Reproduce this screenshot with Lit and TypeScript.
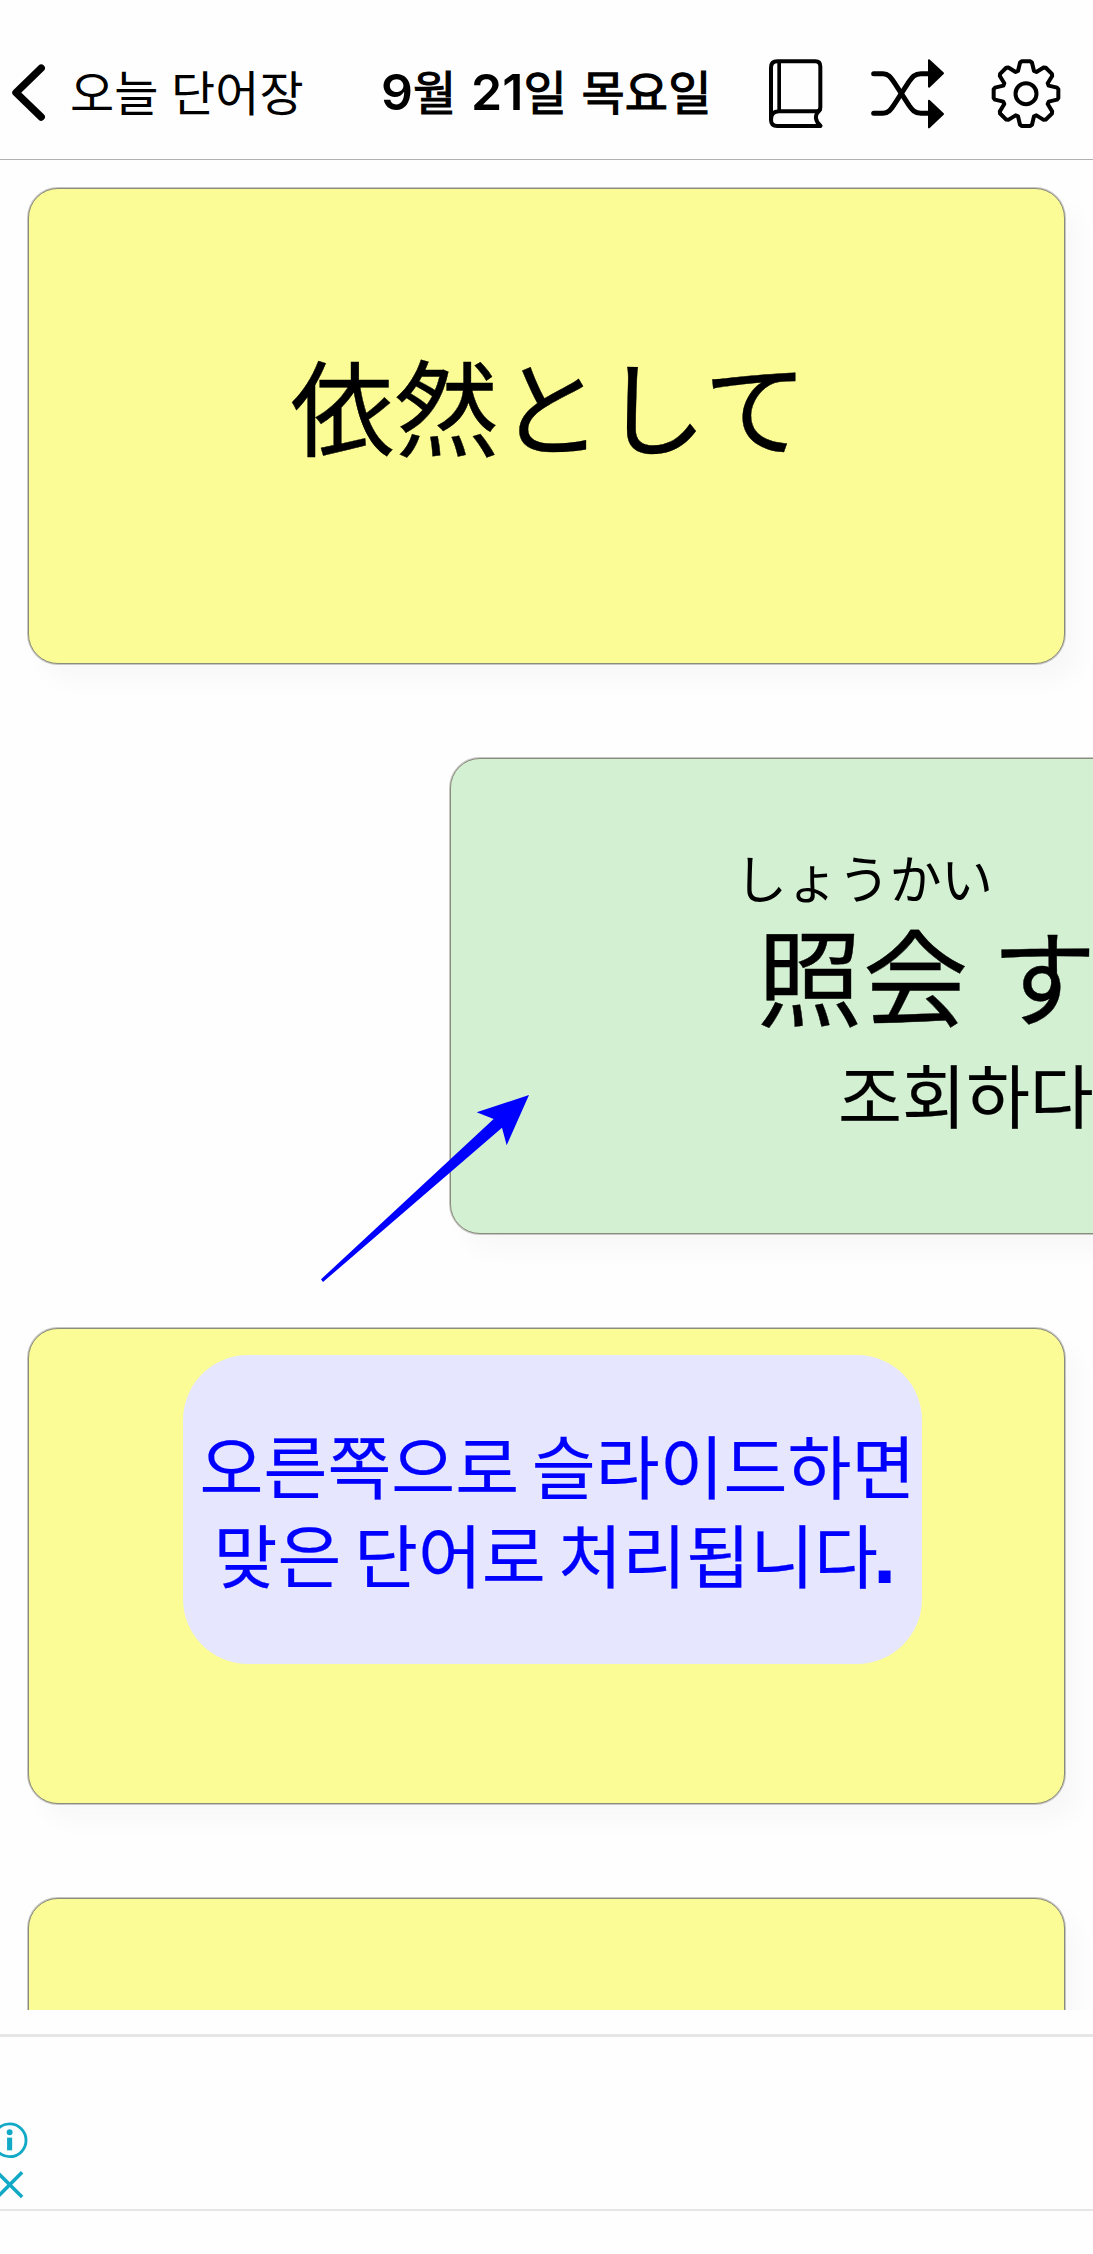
import { LitElement, html, css, svg } from "lit";
import { customElement, property } from "lit/decorators.js";

/** Outline of an eight-toothed gear centred on (cx, cy). */
function gearPath(cx: number, cy: number): string {
  const tooth: [number, number][] = [
    [-24, -68],
    [-18, -93],
    [-13, -97],
    [13, -97],
    [18, -93],
    [24, -68],
  ];
  const points: string[] = [];
  for (let i = 0; i < 8; i++) {
    const a = (i * Math.PI) / 4;
    for (const [x, y] of tooth) {
      const px = cx + x * Math.cos(a) - y * Math.sin(a);
      const py = cy + x * Math.sin(a) + y * Math.cos(a);
      points.push(`${px.toFixed(1)} ${py.toFixed(1)}`);
    }
  }
  return `M${points.join("L")}Z`;
}

@customElement("word-header")
export class WordHeader extends LitElement {
  static styles = css`
    :host {
      display: flex;
      align-items: flex-start;
      height: 159px;
      box-sizing: content-box;
      border-bottom: 1px solid #b0b0b0;
      color: #000;
      font-family: "Noto Sans CJK KR", sans-serif;
      white-space: nowrap;
    }
    svg {
      display: block;
      flex: none;
      fill: none;
      stroke: #000;
      stroke-linecap: round;
      stroke-linejoin: round;
    }
    .chevron { width: 35px; height: 59px; margin: 63px 0 0 11px; }
    .back {
      flex: none;
      width: 309px;
      margin: 54.500px 0 0 24px;
      font-size: 48px;
      line-height: 70px;
      letter-spacing: 0;
      word-spacing: 2px;
    }
    .title {
      flex: none;
      width: 388px;
      margin: 55px 0 0 2px;
      font-size: 47px;
      line-height: 70px;
      letter-spacing: 0.1px;
      -webkit-text-stroke: 1.2px #000;
      word-spacing: 4px;
    }
    .digits {
      font-family: Inter, sans-serif;
      font-size: 50px;
      font-weight: 600;
      line-height: 1px;
      -webkit-text-stroke: 0;
    }
    .book { width: 54px; height: 70px; margin-top: 59px; }
    .shuffle { width: 74px; height: 70px; margin: 58.7px 0 0 47.7px; }
    .gear { width: 70px; height: 70px; margin: 58.7px 0 0 46.500px; }
  `;

  render() {
    return html`
      <svg class="chevron" viewBox="0 0 35 59">
        <path stroke-width="7.4" d="M30.2 5.2L5 29.7L30.2 54" />
      </svg>
      <div class="back">오늘 단어장</div>
      <div class="title"><span class="digits">9</span>월 <span class="digits">21</span>일 목요일</div>
      <svg class="book" viewBox="87 57 162 210" stroke-width="12">
        <path d="M241 258H112Q93 258 93 239V83Q93 64 112 64H226Q241 64 241 80V202Q241 214 231 214H117Q93 214 93 239" />
        <path d="M117.500 66V212" stroke-width="11" />
        <path d="M238 211Q216 233 241 257" />
      </svg>
      <svg class="shuffle" viewBox="392 56 222 210" stroke-width="15">
        <path d="M400 100H428C445 100 452 112 462 127L506 195C515 208 523 219 542 219H566" />
        <path d="M400 219H428C445 219 452 207 462 192L506 124C515 111 523 100 542 100H566" />
        <path fill="#000" stroke-width="6" d="M566 60L608 99L566 139ZM566 181L608 221L566 261Z" />
      </svg>
      <svg class="gear" viewBox="755 56 210 210" stroke-width="12">
        ${svg`<path d=${gearPath(860, 160)} />`}
        <circle cx="860" cy="160" r="31.500" />
      </svg>
    `;
  }
}

@customElement("word-card")
export class WordCard extends LitElement {
  @property({ reflect: true }) tone = "yellow";

  static styles = css`
    :host {
      display: flex;
      flex-direction: column;
      align-items: center;
      flex: none;
      box-sizing: border-box;
      width: 1037px;
      height: 476px;
      margin-left: 28px;
      border: 1px solid #8c8c7c;
      border-radius: 30px;
      background: #fcfc96;
      box-shadow: 0 0 0 1px #c6c6c4, 14px 18px 24px rgba(20, 20, 50, 0.027);
    }
    :host([tone="green"]) {
      margin-left: 450px;
      background: #d3f0d2;
    }
  `;

  render() {
    return html`<slot></slot>`;
  }
}

@customElement("app-root")
export class AppRoot extends LitElement {
  static styles = css`
    :host {
      display: block;
      position: relative;
      width: 1093px;
      height: 2254px;
      overflow: hidden;
      background: #fefefe;
      color: #000;
    }
    .list {
      display: flex;
      flex-direction: column;
      gap: 94px;
      box-sizing: border-box;
      height: 1850px;
      padding-top: 28px;
      overflow: hidden;
    }
    .ja { font-family: "Noto Sans CJK JP", sans-serif; }
    .ko { font-family: "Noto Sans CJK KR", sans-serif; }
    .word {
      margin-top: 139.500px;
      padding-left: 5px;
      font-size: 104px;
      line-height: 150px;
      white-space: nowrap;
      -webkit-text-stroke: 0.4px #000;
    }
    .entry {
      display: flex;
      flex-direction: column;
      width: 100%;
      white-space: nowrap;
    }
    .reading {
      margin: 84.500px 0 0 284px;
      font-size: 52px;
      line-height: 66px;
      letter-spacing: -0.5px;
    }
    .kanji {
      margin: -3.500px 0 0 306px;
      font-size: 105px;
      line-height: 132px;
      letter-spacing: 1px;
      word-spacing: -2px;
      -webkit-text-stroke: 0.4px #000;
    }
    .meaning {
      margin: 4.500px 0 0 387px;
      font-size: 69.500px;
      line-height: 100px;
      -webkit-text-stroke: 0.2px #000;
    }
    .arrow {
      position: absolute;
      left: 321px;
      top: 1095px;
      width: 208px;
      height: 188px;
    }
    .tip {
      position: absolute;
      left: 182.500px;
      top: 1355px;
      width: 739.500px;
      height: 309px;
      box-sizing: border-box;
      padding-top: 63.500px;
      border-radius: 65px;
      background: #e6e6fe;
      color: #00f;
      font-size: 69.500px;
      line-height: 89.500px;
      word-spacing: -3px;
      white-space: nowrap;
      -webkit-text-stroke: 0.2px #00f;
    }
    .line1 { margin-left: 17px; }
    .line2 { margin-left: 31px; }
    .dot {
      margin-left: -5px;
      font: 700 84px/1px "Liberation Sans", sans-serif;
      -webkit-text-stroke: 0;
    }
    .ad {
      display: flex;
      flex-direction: column;
      box-sizing: border-box;
      height: 177px;
      margin-top: 24px;
      border-top: 3px solid #e6e6e6;
      border-bottom: 2px solid #e6e6e6;
    }
    .adchoices {
      display: block;
      width: 29px;
      height: 90px;
      margin-top: 84px;
      fill: none;
      stroke: #12a9c6;
    }
  `;

  render() {
    return html`
      <word-header></word-header>
      <main class="list">
        <word-card><div class="word ja">依然として</div></word-card>
        <word-card tone="green">
          <div class="entry">
            <div class="reading ja">しょうかい</div>
            <div class="kanji ja">照会 する</div>
            <div class="meaning ko">조회하다</div>
          </div>
        </word-card>
        <word-card></word-card>
        <word-card></word-card>
      </main>
      <footer class="ad">
        <svg class="adchoices" viewBox="0 0 29 90">
          <circle cx="9.500" cy="19.700" r="16.800" stroke-width="2.900" />
          <circle cx="9.500" cy="11.500" r="3" fill="#12a9c6" stroke="none" />
          <path d="M9.500 17V30" stroke-width="5.200" />
          <path d="M-3 52.500L22.300 77.800M22.300 52.500L-3 77.800" stroke-width="3.600" />
        </svg>
      </footer>
      <svg class="arrow" viewBox="63 75 624 564">
        <path fill="#00f" d="M687 75L530 127L581 147L63 628L69 636L606 173L620 226Z" />
      </svg>
      <div class="tip ko">
        <div class="line1">오른쪽으로 슬라이드하면</div>
        <div class="line2">맞은 단어로 처리됩니다<span class="dot">.</span></div>
      </div>
    `;
  }
}
